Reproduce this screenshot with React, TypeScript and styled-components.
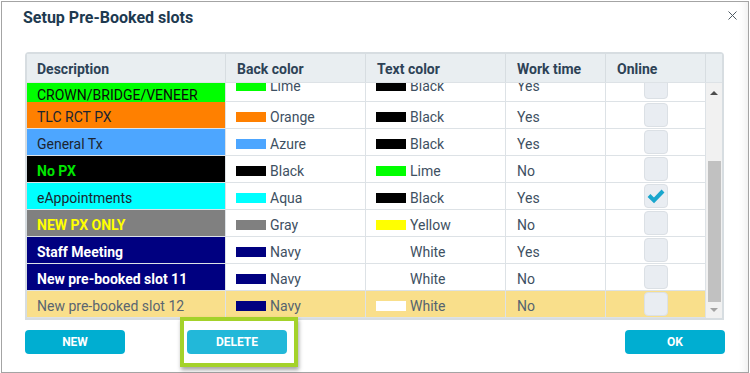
import React from 'react';
import styled, { createGlobalStyle } from 'styled-components';

const GlobalStyle = createGlobalStyle`
  html, body {
    margin: 0;
    padding: 0;
    background: #fff;
  }
  body {
    font-family: Roboto, 'Liberation Sans', sans-serif;
  }
  * {
    box-sizing: border-box;
  }
`;

const Dialog = styled.div`
  width: 748px;
  height: 372px;
  margin: 1px 0 0 1px;
  border: 1px solid #a4a4a4;
  background: #fff;
  display: flex;
  flex-direction: column;
  box-shadow: inset -8px 0 8px -6px rgba(0, 0, 0, 0.08);
`;

const TitleBar = styled.div`
  display: flex;
  align-items: flex-start;
  justify-content: space-between;
  padding: 7px 11px 0 21px;
`;

const Title = styled.h1`
  margin: 0;
  font-size: 16px;
  line-height: 18px;
  font-weight: 700;
  color: #1d3a50;
`;

const CloseButton = styled.button`
  border: 0;
  background: none;
  padding: 0;
  margin-top: 2px;
  display: flex;
  cursor: pointer;
`;

const Table = styled.div`
  margin: 25px 0 0 23px;
  width: 699px;
  border: 2px solid #d7dde1;
  border-radius: 4px 4px 0 0;
  display: flex;
  flex-direction: column;
`;

const HeaderRow = styled.div`
  display: grid;
  grid-template-columns: 199px 140px 140px 100px 100px 16px;
  height: 29px;
  background: #e9eef1;
  border-bottom: 1px solid #dde2e6;
`;

const HeaderCell = styled.div<{ $pad?: number }>`
  display: flex;
  align-items: center;
  padding: 2px 0 0 ${p => p.$pad ?? 11}px;
  border-right: 1px solid #d7dde1;
  font-size: 14px;
  font-weight: 700;
  color: #2d4256;

  &:last-child {
    border-right: 0;
  }
`;

const Body = styled.div`
  display: flex;
  height: 235px;
`;

const Rows = styled.div`
  flex: 1;
  overflow: hidden;
`;

const Row = styled.div<{ $selected?: boolean; $partial?: boolean }>`
  display: grid;
  grid-template-columns: 199px 140px 140px 100px 100px;
  height: 27px;
  margin-top: ${p => (p.$partial ? '-8px' : '0')};
  border-bottom: 1px solid #dde2e6;
  background: ${p => (p.$selected ? '#f9df8b' : '#fff')};
`;

// the first row sits half under the header, its right-hand cells ride a bit higher
const Cell = styled.div<{ $lift?: boolean; $muted?: boolean }>`
  display: flex;
  align-items: center;
  padding: ${p => (p.$lift ? '0 0 12px 11px' : '4px 0 0 11px')};
  border-right: 1px solid #dde2e6;
  font-size: 14px;
  color: ${p => (p.$muted ? '#55636f' : '#3e5062')};
  white-space: nowrap;
`;

const DescCell = styled.div<{ $bg: string; $fg: string; $bold?: boolean; $partial?: boolean }>`
  display: flex;
  align-items: center;
  padding: ${p => (p.$partial ? '6px' : '4px')} 0 0 10px;
  border-right: 1px solid #dde2e6;
  background: ${p => p.$bg};
  color: ${p => p.$fg};
  font-size: 14px;
  font-weight: ${p => (p.$bold ? 700 : 400)};
  white-space: nowrap;
`;

const SwatchCell = styled(Cell)`
  padding-left: 10px;
`;

const Swatch = styled.span<{ $color: string }>`
  width: 30px;
  height: 10px;
  margin-right: 4px;
  background: ${p => p.$color};
  flex-shrink: 0;
`;

const CheckCell = styled.div<{ $lift?: boolean }>`
  display: flex;
  align-items: center;
  justify-content: center;
  padding-bottom: ${p => (p.$lift ? '10px' : '0')};
  border-right: 1px solid #dde2e6;
`;

const Checkbox = styled.div`
  width: 24px;
  height: 24px;
  border-radius: 4px;
  background: #e9edf2;
  border: 1px solid #dbe0e5;
  display: flex;
  align-items: center;
  justify-content: center;
`;

const ScrollTrack = styled.div`
  width: 16px;
  background: #f1f1f1;
  display: flex;
  flex-direction: column;
  align-items: center;
`;

const ArrowUp = styled.div`
  height: 20px;
  display: flex;
  align-items: center;
  justify-content: center;
  &::before {
    content: '';
    border-left: 4px solid transparent;
    border-right: 4px solid transparent;
    border-bottom: 4px solid #4d4d4d;
  }
`;

const ArrowDown = styled.div`
  margin-top: auto;
  height: 16px;
  display: flex;
  align-items: center;
  justify-content: center;
  &::before {
    content: '';
    border-left: 4px solid transparent;
    border-right: 4px solid transparent;
    border-top: 4px solid #a3a3a3;
  }
`;

const Thumb = styled.div`
  width: 13px;
  height: 141px;
  margin-top: 58px;
  background: #c1c1c1;
`;

const Footer = styled.div`
  display: flex;
  align-items: flex-start;
  padding: 10px 23px 0 23px;
`;

const ActionButton = styled.button<{ $bg: string }>`
  width: 100px;
  height: 24px;
  border: 0;
  border-radius: 4px;
  background: ${p => p.$bg};
  color: #fff;
  font-family: Roboto, 'Liberation Sans', sans-serif;
  font-size: 12px;
  font-weight: 700;
  padding: 0;
  cursor: pointer;
`;

const DeleteWrap = styled.div`
  position: relative;
  margin-left: 62px;
  display: flex;

  &::after {
    content: '';
    position: absolute;
    top: -13px;
    left: -7px;
    right: -11px;
    bottom: -13px;
    border: 4px solid #a4d22a;
    box-shadow: 1px 3px 4px rgba(0, 0, 0, 0.35);
    pointer-events: none;
  }
`;

const OkWrap = styled.div`
  margin-left: auto;
  display: flex;
`;

interface Slot {
  desc: string;
  bg: string;
  fg: string;
  bold?: boolean;
  back: string;
  backSw: string;
  text: string;
  textSw: string;
  work: string;
  online: boolean;
}

const slots: Slot[] = [
  { desc: 'CROWN/BRIDGE/VENEER', bg: '#00ff00', fg: '#0a0a0a', back: 'Lime', backSw: '#00ff00', text: 'Black', textSw: '#000', work: 'Yes', online: false },
  { desc: 'TLC RCT PX', bg: '#ff8000', fg: '#1c2530', back: 'Orange', backSw: '#ff8000', text: 'Black', textSw: '#000', work: 'Yes', online: false },
  { desc: 'General Tx', bg: '#4da6ff', fg: '#1c2530', back: 'Azure', backSw: '#4da6ff', text: 'Black', textSw: '#000', work: 'Yes', online: false },
  { desc: 'No PX', bg: '#000000', fg: '#00e600', bold: true, back: 'Black', backSw: '#000', text: 'Lime', textSw: '#00ff00', work: 'No', online: false },
  { desc: 'eAppointments', bg: '#00ffff', fg: '#1c2530', back: 'Aqua', backSw: '#00ffff', text: 'Black', textSw: '#000', work: 'Yes', online: true },
  { desc: 'NEW PX ONLY', bg: '#808080', fg: '#ffff00', bold: true, back: 'Gray', backSw: '#808080', text: 'Yellow', textSw: '#ffff00', work: 'No', online: false },
  { desc: 'Staff Meeting', bg: '#000080', fg: '#ffffff', bold: true, back: 'Navy', backSw: '#000080', text: 'White', textSw: '#ffffff', work: 'Yes', online: false },
  { desc: 'New pre-booked slot 11', bg: '#000080', fg: '#ffffff', bold: true, back: 'Navy', backSw: '#000080', text: 'White', textSw: '#ffffff', work: 'No', online: false },
  { desc: 'New pre-booked slot 12', bg: 'transparent', fg: '#5a6570', back: 'Navy', backSw: '#000080', text: 'White', textSw: '#ffffff', work: 'No', online: false },
];

const CheckMark = () => (
  <svg width="18" height="16" viewBox="0 0 18 16">
    <path d="M2 7.5 L7 12.5 L16 3" fill="none" stroke="#19a6cd" strokeWidth="4" />
  </svg>
);

const App: React.FC = () => {
  const selected = slots.length - 1;
  return (
    <>
      <GlobalStyle />
      <Dialog>
        <TitleBar>
          <Title>Setup Pre-Booked slots</Title>
          <CloseButton aria-label="Close">
            <svg width="9" height="9" viewBox="0 0 9 9">
              <path d="M0.5 0.5 L8.5 8.5 M8.5 0.5 L0.5 8.5" stroke="#4f5a63" strokeWidth="1" />
            </svg>
          </CloseButton>
        </TitleBar>

        <Table>
          <HeaderRow>
            <HeaderCell $pad={10}>Description</HeaderCell>
            <HeaderCell>Back color</HeaderCell>
            <HeaderCell>Text color</HeaderCell>
            <HeaderCell>Work time</HeaderCell>
            <HeaderCell>Online</HeaderCell>
            <HeaderCell />
          </HeaderRow>
          <Body>
            <Rows>
              {slots.map((s, i) => {
                const partial = i === 0;
                const isSel = i === selected;
                return (
                  <Row key={s.desc} $partial={partial} $selected={isSel}>
                    <DescCell $bg={s.bg} $fg={s.fg} $bold={s.bold} $partial={partial}>
                      {s.desc}
                    </DescCell>
                    <SwatchCell $lift={partial} $muted={isSel}>
                      <Swatch $color={s.backSw} />
                      {s.back}
                    </SwatchCell>
                    <SwatchCell $lift={partial} $muted={isSel}>
                      <Swatch $color={s.textSw} />
                      {s.text}
                    </SwatchCell>
                    <Cell $lift={partial} $muted={isSel}>{s.work}</Cell>
                    <CheckCell $lift={partial}>
                      <Checkbox>{s.online && <CheckMark />}</Checkbox>
                    </CheckCell>
                  </Row>
                );
              })}
            </Rows>
            <ScrollTrack>
              <ArrowUp />
              <Thumb />
              <ArrowDown />
            </ScrollTrack>
          </Body>
        </Table>

        <Footer>
          <ActionButton $bg="#00aed1">NEW</ActionButton>
          <DeleteWrap>
            <ActionButton $bg="#22b8d9">DELETE</ActionButton>
          </DeleteWrap>
          <OkWrap>
            <ActionButton $bg="#00aed1">OK</ActionButton>
          </OkWrap>
        </Footer>
      </Dialog>
    </>
  );
};

export default App;
